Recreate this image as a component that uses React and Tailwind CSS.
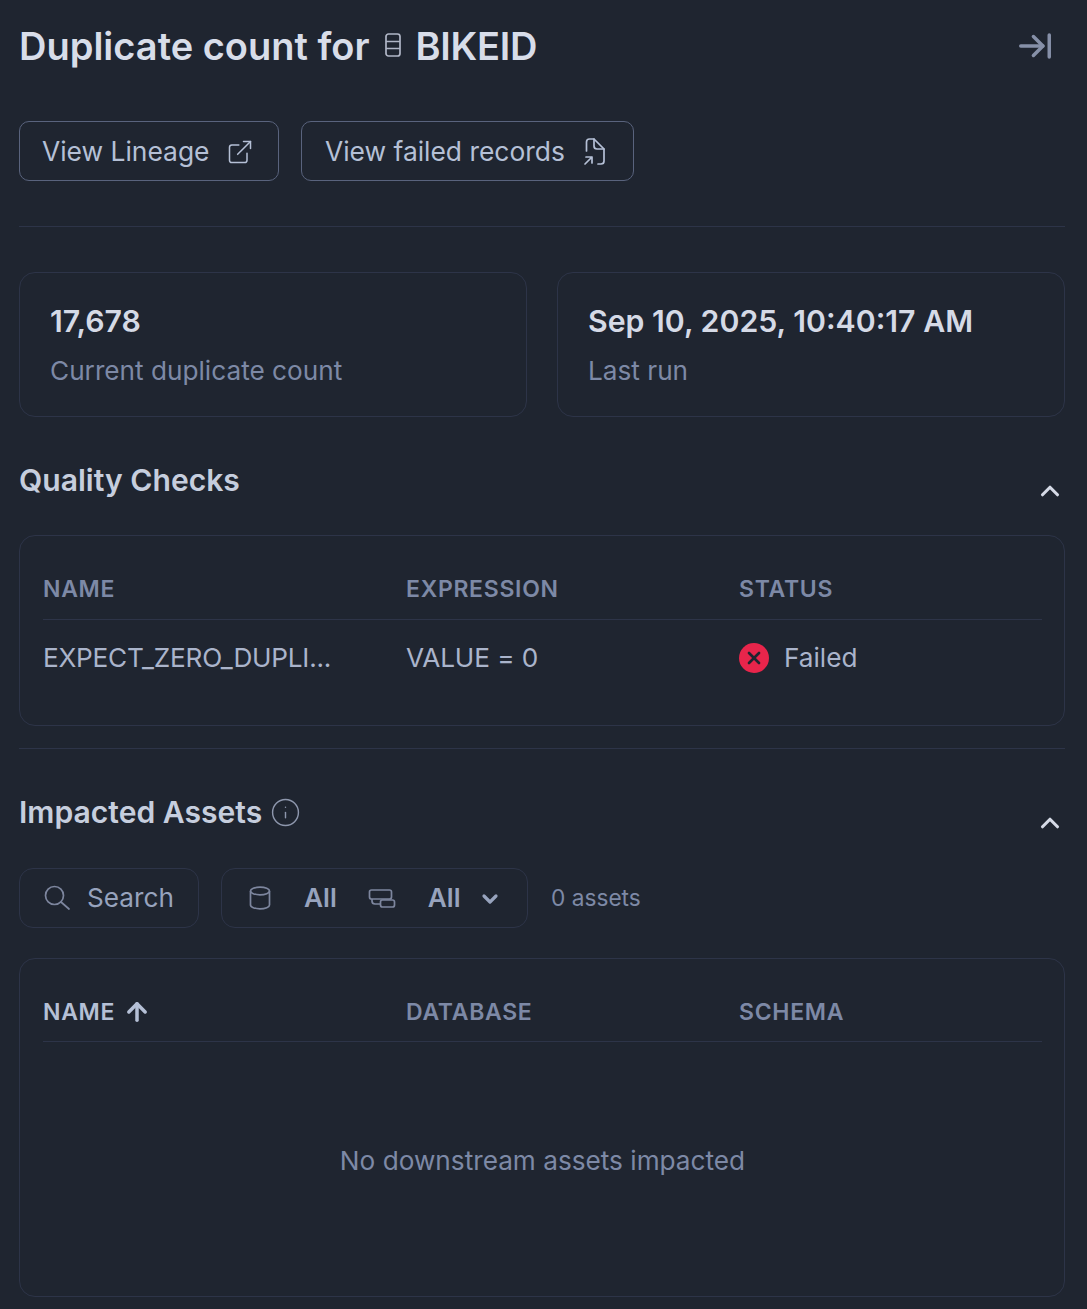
import { ExternalLink, ChevronUp, ChevronDown, ArrowUp, Info, ArrowRightToLine, X } from "lucide-react";

function Header({ title, info, mt }) {
  return (
    <div className={`flex items-start justify-between ${mt}`}>
      <div className="flex items-center gap-[8px]">
        <h2 className="text-[30.1px] leading-[36px] font-semibold text-[#c6cede]">{title}</h2>
        {info && <Info className="w-[31px] h-[31px] text-[#8e97ad]" strokeWidth={1.1} />}
      </div>
      <ChevronUp className="w-[30px] h-[30px] mt-[14px] text-[#d5dae6]" strokeWidth={2.5} />
    </div>
  );
}

function Th({ children, className = "text-[#7d89a6]" }) {
  return <div className={`text-[23px] leading-[28px] font-semibold tracking-[0.7px] ${className}`}>{children}</div>;
}

function StatCard({ value, label }) {
  return (
    <div className="flex-1 h-[145px] border border-[#2d3448] rounded-[16px] pl-[30px] pt-[28px]">
      <div className="text-[30.25px] leading-[40px] font-semibold text-[#d5dae6]">{value}</div>
      <div className="text-[26.2px] leading-[36px] mt-[12px] text-[#7d89a6]">{label}</div>
    </div>
  );
}

export default function App() {
  return (
    <div className="w-[1087px] h-[1309px] overflow-hidden bg-[#1f2530] pl-[19px] pr-[22px] font-['Inter',sans-serif]">
      <div className="flex items-center justify-between pt-[24px]">
        <div className="flex items-center text-[38px] leading-[44px] font-semibold text-[#d8dde9]">
          <span>Duplicate count for</span>
          <svg className="w-[16px] h-[24px] ml-[15px] mr-[15px] mb-[2px] text-[#b0b6c6]" viewBox="0 0 16 24" fill="none" stroke="currentColor" strokeWidth="1.7">
            <rect x="1" y="1" width="14" height="22" rx="2.5" />
            <path d="M1 8.5h14M1 15.5h14" />
          </svg>
          <span className="tracking-[-0.3px]">BIKEID</span>
        </div>
        <ArrowRightToLine className="w-[38px] h-[38px] mr-[11px] text-[#8690a8]" strokeWidth={2.2} />
      </div>

      <div className="flex gap-[22px] mt-[53px]">
        <button className="flex items-center h-[60px] w-[260px] pl-[22px] pt-[1px] gap-[17px] border border-[#59637d] rounded-[10px] text-[26.4px] text-[#b5c0d6]">
          View Lineage
          <ExternalLink className="w-[28px] h-[28px]" strokeWidth={1.3} />
        </button>
        <button className="flex items-center h-[60px] w-[333px] pl-[23px] pt-[1px] gap-[18px] border border-[#59637d] rounded-[10px] text-[26.4px] text-[#b5c0d6]">
          View failed records
          <svg className="w-[24px] h-[30px]" viewBox="0 0 24 30" fill="none" stroke="currentColor" strokeWidth="1.7" strokeLinecap="round" strokeLinejoin="round">
            <path d="M3.5 14V5a3 3 0 0 1 3-3H11L21 12V24a3 3 0 0 1-3 3H15" />
            <path d="M11 2V9a3 3 0 0 0 3 3H21" />
            <path d="M2 27L9 20M3 20H9V26" />
          </svg>
        </button>
      </div>

      <div className="border-t border-[#2d3448] mt-[45px]" />

      <div className="flex gap-[30px] mt-[45px]">
        <StatCard value="17,678" label="Current duplicate count" />
        <StatCard value="Sep 10, 2025, 10:40:17 AM" label="Last run" />
      </div>

      <Header title="Quality Checks" mt="mt-[45px]" />

      <div className="border border-[#2d3448] rounded-[16px] h-[191px] mt-[29px] pl-[23px] pr-[22px]">
        <div className="grid grid-cols-[363px_333px_1fr] items-center h-[84px] border-b border-[#2d3448] pt-[23px]">
          <Th>NAME</Th>
          <Th>EXPRESSION</Th>
          <Th>STATUS</Th>
        </div>
        <div className="grid grid-cols-[363px_333px_1fr] items-center h-[76px] text-[26.2px] text-[#aab4cb]">
          <div className="tracking-[-0.25px]">EXPECT_ZERO_DUPLI...</div>
          <div className="tracking-[-0.1px]">VALUE = 0</div>
          <div className="flex items-center gap-[15px]">
            <span className="flex items-center justify-center w-[30px] h-[30px] rounded-full bg-[#e8254b]">
              <X className="w-[20px] h-[20px] text-[#1f2530]" strokeWidth={3.2} />
            </span>
            Failed
          </div>
        </div>
      </div>

      <div className="border-t border-[#2d3448] mt-[22px]" />

      <Header title="Impacted Assets" info mt="mt-[45px]" />

      <div className="flex items-center mt-[30px]">
        <div className="flex items-center w-[180px] h-[60px] pl-[24px] gap-[17px] border border-[#2d3448] rounded-[14px] text-[26.2px] text-[#97a3bd]">
          <svg className="w-[26px] h-[26px] text-[#7d869e]" viewBox="0 0 26 26" fill="none" stroke="currentColor" strokeWidth="1.7" strokeLinecap="round">
            <circle cx="10.5" cy="10.5" r="9" />
            <path d="M17 17L25 24" />
          </svg>
          Search
        </div>
        <div className="flex items-center w-[307px] h-[60px] ml-[22px] pl-[27px] border border-[#2d3448] rounded-[14px] text-[26.2px] font-semibold text-[#97a3bd]">
          <svg className="w-[22px] h-[24px] text-[#7d869e]" viewBox="0 0 22 24" fill="none" stroke="currentColor" strokeWidth="1.7">
            <ellipse cx="11" cy="5" rx="9.5" ry="3.8" />
            <path d="M1.5 5V19C1.5 21.1 5.8 22.8 11 22.8S20.5 21.1 20.5 19V5" />
          </svg>
          <span className="ml-[33px]">All</span>
          <svg className="w-[28px] h-[21px] ml-[31px] text-[#7d869e]" viewBox="0 0 28 21" fill="none" stroke="currentColor" strokeWidth="1.7">
            <rect x="1.5" y="2" width="22" height="9" rx="2" />
            <rect x="12.5" y="12" width="14" height="7" rx="2" />
            <path d="M4 11v2a3 3 0 0 0 3 3h5.5" />
          </svg>
          <span className="ml-[32px]">All</span>
          <ChevronDown className="w-[24px] h-[24px] ml-[17px] mt-[2px]" strokeWidth={3.2} />
        </div>
        <span className="ml-[23px] text-[22.7px] text-[#7d89a6]">0 assets</span>
      </div>

      <div className="border border-[#2d3448] rounded-[16px] h-[339px] mt-[30px] pl-[23px] pr-[22px]">
        <div className="grid grid-cols-[363px_333px_1fr] items-center h-[83px] border-b border-[#2d3448] pt-[23px]">
          <Th className="flex items-center gap-[8px] text-[#b5c0d6]">
            NAME
            <ArrowUp className="w-[28px] h-[28px]" strokeWidth={3} />
          </Th>
          <Th>DATABASE</Th>
          <Th>SCHEMA</Th>
        </div>
        <div className="flex justify-center pt-[101px] text-[26.2px] leading-[36px] text-[#7d89a6]">
          No downstream assets impacted
        </div>
      </div>
    </div>
  );
}
